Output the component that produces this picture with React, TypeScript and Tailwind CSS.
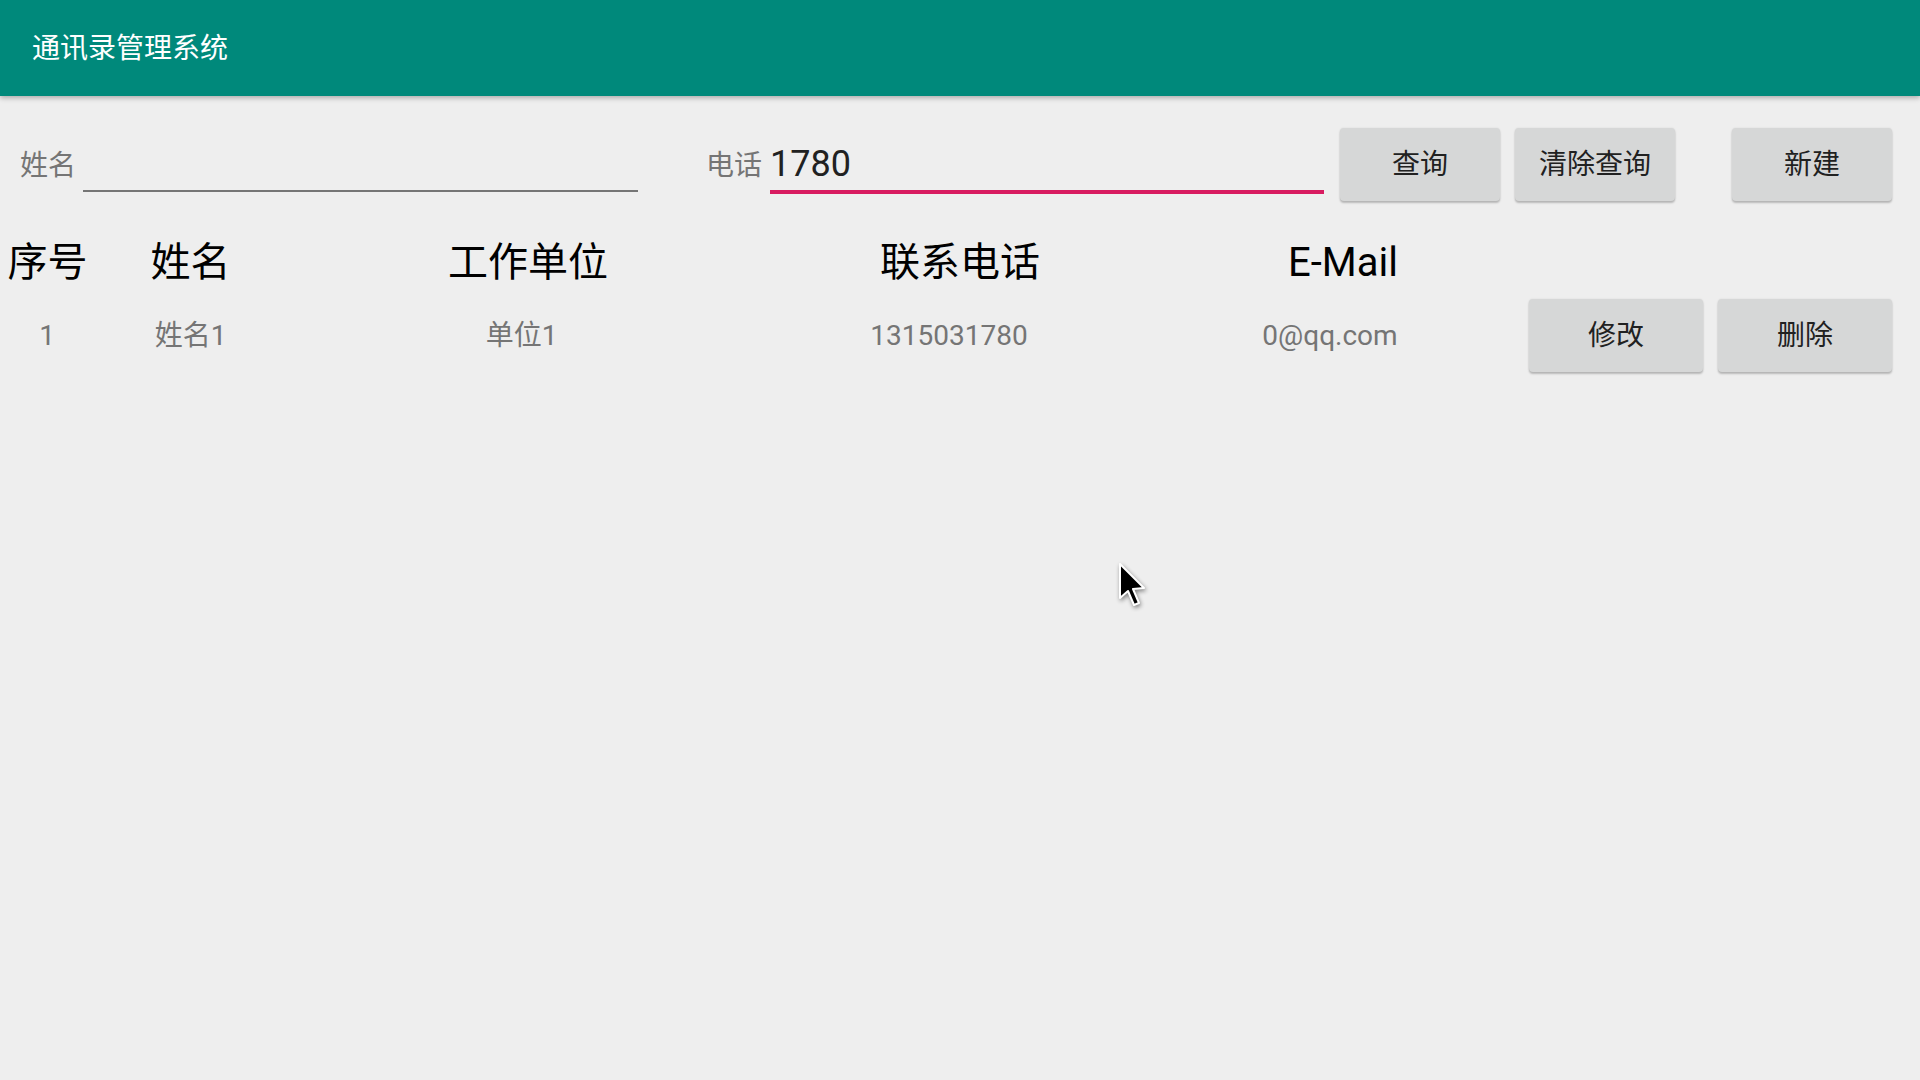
import React from 'react';

const contacts = [
  { id: 1, name: '姓名1', company: '单位1', phone: '1315031780', email: '0@qq.com' },
];

function RaisedButton({ label, className }: { label: string; className: string }) {
  return (
    <button
      className={
        'h-[73px] rounded-[4px] bg-[#D6D7D7] text-[28px] text-[#212121] shadow-[0_2px_2px_rgba(0,0,0,0.22),0_0_2px_rgba(0,0,0,0.10)] ' +
        className
      }
    >
      {label}
    </button>
  );
}

function Cursor() {
  return (
    <svg
      className="absolute left-[1117px] top-[561px] drop-shadow-[1px_2px_2px_rgba(0,0,0,0.45)]"
      width="30"
      height="48"
      viewBox="-3 -3 30 48"
    >
      <path
        d="M0 0 L0 34 L8 27 L14 41 L19 39 L13 25 L24 24 Z"
        fill="#000"
        stroke="#fff"
        strokeWidth="2"
        strokeLinejoin="round"
      />
    </svg>
  );
}

export default function App() {
  return (
    <div className="relative min-h-screen w-full overflow-hidden bg-[#EEEEEE] font-[Roboto,'Noto_Sans_CJK_SC',sans-serif]">
      {/* 标题栏 */}
      <div className="relative z-10 flex h-[96px] items-center bg-[#00897B] pl-[32px] pt-[2px] shadow-[0_2px_5px_rgba(0,0,0,0.28)]">
        <h1 className="text-[28px] text-white">通讯录管理系统</h1>
      </div>

      {/* 查询栏 */}
      <div className="mt-[32px] flex h-[73px] items-start pl-[20px]">
        <div className="flex h-[64px] w-[63px] items-end pb-[8px] text-[28px] leading-[36px] text-[#757575]">姓名</div>
        <div className="h-[64px] w-[555px] border-b-2 border-[#757575]" />
        <div className="ml-[68px] flex h-[64px] w-[64px] items-end pb-[8px] text-[28px] leading-[36px] text-[#757575]">电话</div>
        <div className="flex h-[66px] w-[554px] items-end border-b-4 border-[#D81B60] pb-[8px] text-[36px] leading-[36px] text-[#212121]">
          1780
        </div>
        <RaisedButton label="查询" className="ml-[16px] w-[160px]" />
        <RaisedButton label="清除查询" className="ml-[15px] w-[160px]" />
        <RaisedButton label="新建" className="ml-[57px] w-[160px]" />
      </div>

      {/* 表头 */}
      <div className="mt-[34px] flex h-[56px] items-center text-[40px] text-black">
        <div className="w-[94px] pl-[1px] text-center">序号</div>
        <div className="w-[193px] text-center">姓名</div>
        <div className="w-[482px] text-center">工作单位</div>
        <div className="w-[382px] text-center">联系电话</div>
        <div className="w-[384px] text-center">E-Mail</div>
      </div>

      {/* 数据行 */}
      {contacts.map((c) => (
        <div key={c.id} className="mt-[8px] flex h-[73px] items-center text-[28px] text-[#757575]">
          <div className="w-[94px] text-center">{c.id}</div>
          <div className="w-[193px] text-center">{c.name}</div>
          <div className="w-[482px] pr-[13px] text-center">{c.company}</div>
          <div className="w-[382px] pr-[22px] text-center">{c.phone}</div>
          <div className="w-[378px] pr-[20px] text-center">{c.email}</div>
          <RaisedButton label="修改" className="w-[174px]" />
          <RaisedButton label="删除" className="ml-[15px] w-[174px]" />
        </div>
      ))}

      <Cursor />
    </div>
  );
}
